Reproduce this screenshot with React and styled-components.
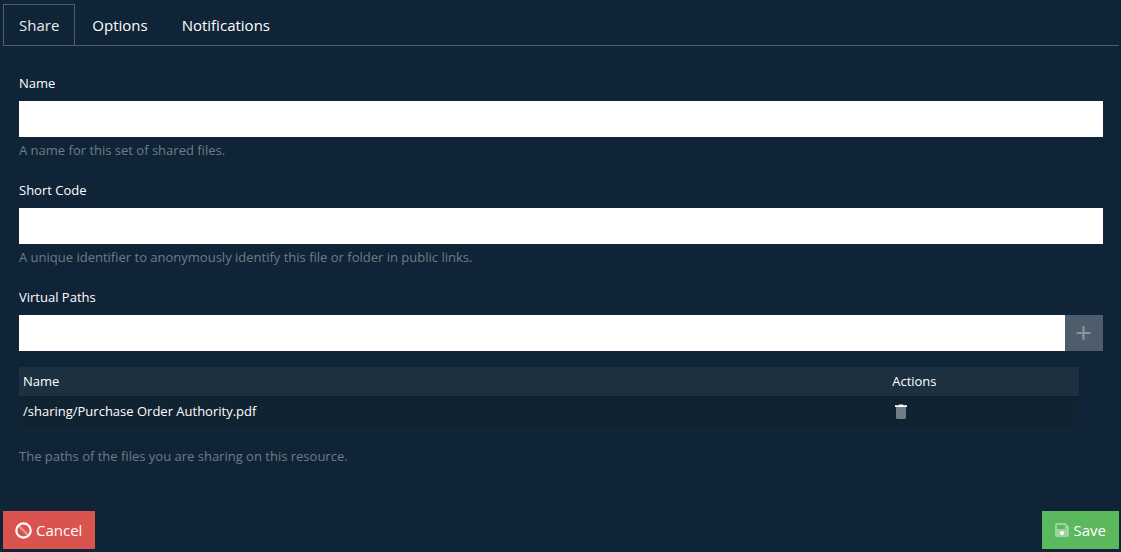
import React, { useState } from "react"
import styled, { createGlobalStyle, css } from "styled-components"

const GlobalStyles = createGlobalStyle`
  :root {
    --page: #102437;
    --line: #4e5d6c;
    --text: #ebebeb;
    --muted: #6f7c84;
    --danger: #d9534f;
    --success: #5cb85c;
  }

  *,
  *::before,
  *::after {
    box-sizing: border-box;
  }

  body {
    margin: 0;
    background: var(--page);
    color: var(--text);
    font-family: "Segoe UI", "Open Sans", "Noto Sans", sans-serif;
    font-size: 13px;
    line-height: 21px;
  }

  button,
  input {
    font: inherit;
  }
`

const Page = styled.main`
  padding: 4px 2px 3px 3px;
`

const Tabs = styled.div`
  display: flex;
  border-bottom: 1px solid var(--line);
`

const Tab = styled.button`
  padding: 8px 16px;
  margin-bottom: -1px;
  border: 1px solid transparent;
  background: transparent;
  color: #fff;
  font-size: 15px;
  line-height: 24px;
  cursor: pointer;

  ${({ $active }) =>
    $active &&
    css`
      padding: 8px 15px;
      border-color: var(--line);
      background: var(--page);
      color: var(--text);
    `}
`

const Form = styled.form`
  display: flex;
  flex-direction: column;
`

const Fields = styled.div`
  display: flex;
  flex-direction: column;
  gap: 19px;
  padding: 27px 16px 44px;
`

const Label = styled.label`
  display: block;
  margin-bottom: 7px;
  color: #fff;
`

const Help = styled.p`
  margin: ${({ $spaced }) => ($spaced ? "19px" : "3px")} 0 0;
  color: var(--muted);
`

const InputGroup = styled.div`
  display: flex;
`

const Input = styled.input`
  display: block;
  flex: 1;
  width: 100%;
  min-width: 0;
  height: 36px;
  padding: 6px 12px;
  border: 0;
  border-radius: 0;
  background: #fff;
  color: #2b3e50;
`

const AddButton = styled.button`
  display: flex;
  align-items: center;
  justify-content: center;
  width: 38px;
  padding: 0;
  border: 0;
  background: var(--line);
  color: #8b959f;
  cursor: pointer;
`

const TableWrap = styled.div`
  padding: 16px 24px 0 0;
`

const Table = styled.table`
  width: 100%;
  border-collapse: separate;
  border-spacing: 0;
  table-layout: fixed;
  background: #102331;

  th,
  td {
    padding: 4px;
    border-bottom: 1px solid #0e1e2b;
    color: #fff;
    font-weight: 400;
    text-align: left;
    vertical-align: middle;
  }

  th {
    background: #1c3040;
  }

  th:first-child {
    width: 82%;
  }
`

const IconButton = styled.button`
  display: flex;
  padding: 0 3px;
  border: 0;
  background: transparent;
  cursor: pointer;
`

const Footer = styled.footer`
  display: flex;
  justify-content: space-between;
`

const Button = styled.button`
  display: flex;
  align-items: center;
  gap: 4px;
  padding: 7px 13px 7px 12px;
  border: 0;
  background: var(--${({ $variant }) => $variant});
  color: #fff;
  font-size: 15px;
  line-height: 24px;
  cursor: pointer;
`

const PlusIcon = () => (
  <svg width="16" height="16" viewBox="0 0 16 16" aria-hidden="true">
    <path d="M7.5 2v12M1.5 8h12" stroke="currentColor" strokeWidth="2.2" strokeLinecap="round" />
  </svg>
)

const TrashIcon = () => (
  <svg width="12" height="16" viewBox="0 0 12 16" aria-hidden="true">
    <path d="M1 3h10v10.5a1.5 1.5 0 0 1-1.5 1.5h-7A1.5 1.5 0 0 1 1 13.500z" fill="#6f7d87" />
    <path d="M0 1.300h3.500L4.200.500h3.600l.7.800H12V3H0z" fill="#fff" />
  </svg>
)

const BanIcon = () => (
  <svg width="17" height="17" viewBox="0 0 17 17" fill="none" aria-hidden="true">
    <path d="M4 4l9 9" stroke="#fff" strokeOpacity="0.4" strokeWidth="2.4" />
    <circle cx="8.5" cy="8.5" r="7.2" stroke="#fff" strokeWidth="2.2" />
  </svg>
)

const SaveIcon = () => (
  <svg width="16" height="16" viewBox="0 0 16 16" aria-hidden="true">
    <path
      d="M2.500 1h8.800l3.700 3.700V13.500a1.500 1.500 0 0 1-1.500 1.500h-11A1.500 1.500 0 0 1 1 13.500v-11A1.500 1.500 0 0 1 2.500 1zM3 3v4h8V3z"
      fill="#fff"
      fillOpacity="0.4"
      fillRule="evenodd"
    />
    <circle cx="8" cy="11" r="2.1" fill="#fff" />
  </svg>
)

const tabs = ["Share", "Options", "Notifications"]
const sharedPaths = ["/sharing/Purchase Order Authority.pdf"]

const Field = ({ id, label, help }) => (
  <div>
    <Label htmlFor={id}>{label}</Label>
    <Input id={id} type="text" />
    <Help>{help}</Help>
  </div>
)

const PathTable = ({ paths, onRemove }) => (
  <TableWrap>
    <Table>
      <thead>
        <tr>
          <th>Name</th>
          <th>Actions</th>
        </tr>
      </thead>
      <tbody>
        {paths.map(path => (
          <tr key={path}>
            <td>{path}</td>
            <td>
              <IconButton type="button" aria-label="Remove" onClick={() => onRemove(path)}>
                <TrashIcon />
              </IconButton>
            </td>
          </tr>
        ))}
      </tbody>
    </Table>
  </TableWrap>
)

const App = () => {
  const [active, setActive] = useState("Share")
  const [paths, setPaths] = useState(sharedPaths)
  const [newPath, setNewPath] = useState("")

  const addPath = () => {
    if (!newPath || paths.includes(newPath)) return
    setPaths([...paths, newPath])
    setNewPath("")
  }

  return (
    <>
      <GlobalStyles />
      <Page>
        <Tabs role="tablist">
          {tabs.map(tab => (
            <Tab
              key={tab}
              type="button"
              role="tab"
              aria-selected={tab === active}
              $active={tab === active}
              onClick={() => setActive(tab)}
            >
              {tab}
            </Tab>
          ))}
        </Tabs>
        <Form onSubmit={e => e.preventDefault()}>
          <Fields>
            <Field id="name" label="Name" help="A name for this set of shared files." />
            <Field
              id="shortCode"
              label="Short Code"
              help="A unique identifier to anonymously identify this file or folder in public links."
            />
            <div>
              <Label htmlFor="virtualPath">Virtual Paths</Label>
              <InputGroup>
                <Input
                  id="virtualPath"
                  type="text"
                  value={newPath}
                  onChange={e => setNewPath(e.target.value)}
                />
                <AddButton type="button" aria-label="Add path" onClick={addPath}>
                  <PlusIcon />
                </AddButton>
              </InputGroup>
              <PathTable
                paths={paths}
                onRemove={path => setPaths(paths.filter(p => p !== path))}
              />
              <Help $spaced>The paths of the files you are sharing on this resource.</Help>
            </div>
          </Fields>
          <Footer>
            <Button type="button" $variant="danger">
              <BanIcon />
              Cancel
            </Button>
            <Button type="submit" $variant="success">
              <SaveIcon />
              Save
            </Button>
          </Footer>
        </Form>
      </Page>
    </>
  )
}

export default App
